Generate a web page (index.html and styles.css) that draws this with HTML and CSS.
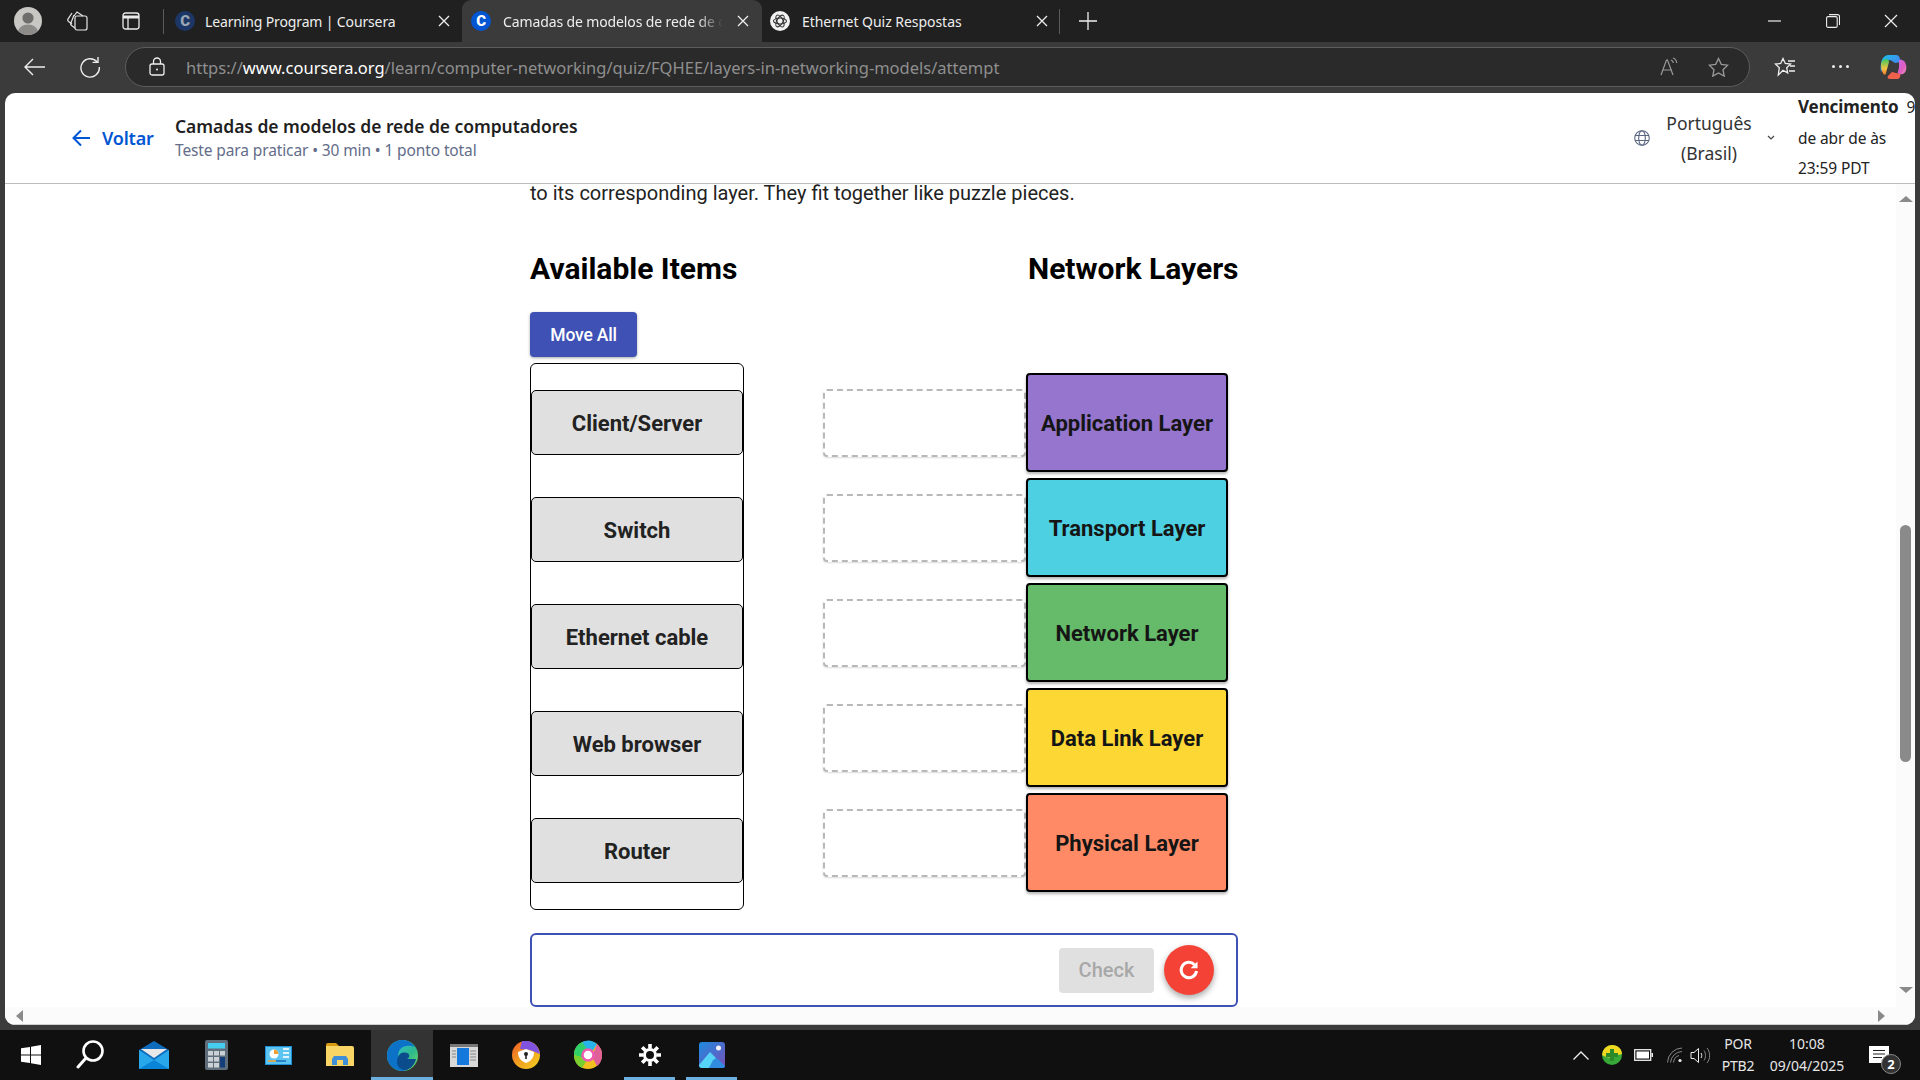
FILE: index.html
```html
<!DOCTYPE html>
<html lang="pt-BR">
<head>
<meta charset="utf-8">
<title>Camadas de modelos de rede de computadores</title>
<link rel="stylesheet" href="styles.css">
</head>
<body>
<div class="titlebar">
  <div class="slot-avatar"><svg width="28" height="28" viewBox="0 0 28 28"><defs><clipPath id="av"><circle cx="14" cy="14" r="14"/></clipPath></defs><circle cx="14" cy="14" r="14" fill="#c9c7c4"/><g clip-path="url(#av)"><circle cx="14" cy="11" r="5.6" fill="#6f6d6b"/><ellipse cx="14" cy="25" rx="10" ry="7.5" fill="#8d8b88"/></g></svg></div>
  <div class="slot-icon first"><svg width="22" height="22" viewBox="0 0 22 22" fill="none" stroke="#e6e6e6" stroke-width="1.2"><rect x="8" y="6" width="12" height="14" rx="2"/><path d="M8 18 4.5 15.5a2 2 0 0 1-.6-2.4L7 5M5 14 1.5 11.5a2 2 0 0 1-.4-2.6L5 3M7 6l3-4 6 4"/></svg></div>
  <div class="slot-icon"><svg width="18" height="18" viewBox="0 0 18 18" fill="none" stroke="#eaeaea" stroke-width="1.3"><rect x="1" y="1" width="16" height="16" rx="2.5"/><path d="M1 5h16" stroke-width="3"/><path d="M6 5v12"/></svg></div>
  <div class="tab-sep"></div>
  <div class="tab tab-one">
    <span class="favicon fav-dim">C</span><span class="tab-title">Learning Program | Coursera</span>
    <svg class="tab-x" width="12" height="12" viewBox="0 0 12 12"><path d="M1 1l10 10M11 1 1 11" stroke="#eee" stroke-width="1.3"/></svg>
  </div>
  <div class="tab tab-active">
    <span class="favicon fav-blue">C</span><span class="tab-title tab-fade">Camadas de modelos de rede de computadores</span>
    <svg class="tab-x" width="12" height="12" viewBox="0 0 12 12"><path d="M1 1l10 10M11 1 1 11" stroke="#eee" stroke-width="1.3"/></svg>
  </div>
  <div class="tab tab-three">
    <svg class="fav-svg" width="20" height="20" viewBox="0 0 20 20"><circle cx="10" cy="10" r="10" fill="#f2f2f2"/><g fill="none" stroke="#333" stroke-width="1.1"><ellipse cx="10" cy="10" rx="6.5" ry="3"/><ellipse cx="10" cy="10" rx="6.5" ry="3" transform="rotate(60 10 10)"/><ellipse cx="10" cy="10" rx="6.5" ry="3" transform="rotate(120 10 10)"/></g></svg>
    <span class="tab-title">Ethernet Quiz Respostas</span>
    <svg class="tab-x" width="12" height="12" viewBox="0 0 12 12"><path d="M1 1l10 10M11 1 1 11" stroke="#eee" stroke-width="1.3"/></svg>
  </div>
  <div class="tab-sep after"></div>
  <svg class="plus" width="18" height="18" viewBox="0 0 18 18"><path d="M9 0v18M0 9h18" stroke="#eee" stroke-width="1.3"/></svg>
  <div class="winctl">
    <svg width="14" height="14" viewBox="0 0 14 14"><path d="M0 7h13" stroke="#eee" stroke-width="1.2"/></svg>
    <svg width="14" height="14" viewBox="0 0 14 14" fill="none" stroke="#eee" stroke-width="1.1"><rect x=".6" y="2.6" width="10.6" height="10.8" rx="1.5"/><path d="M3 .6h8.5a2 2 0 0 1 2 2V11"/></svg>
    <svg width="14" height="14" viewBox="0 0 14 14"><path d="M1 1l12 12M13 1 1 13" stroke="#eee" stroke-width="1.2"/></svg>
  </div>
</div>

<div class="toolbar">
  <svg class="tool-back" width="22" height="18" viewBox="0 0 22 18" fill="none" stroke="#eee" stroke-width="1.4"><path d="M21 9H1M9 1 1 9l8 8"/></svg>
  <svg class="tool-reload" width="22" height="22" viewBox="0 0 22 22" fill="none" stroke="#eee" stroke-width="1.4"><path d="M18.2 6A9.2 9.2 0 1 0 20.3 11"/><path d="M19 1v5.4h-5.4"/></svg>
  <div class="address">
    <svg width="16" height="19" viewBox="0 0 16 19" fill="none" stroke="#eee" stroke-width="1.3"><rect x="1" y="7" width="14" height="11" rx="2"/><path d="M4.5 7V4.5a3.5 3.5 0 0 1 7 0V7"/><circle cx="8" cy="12.5" r="1" fill="#eee" stroke="none"/></svg>
    <span class="url"><span class="url-dim">https://</span><span class="url-host">www.coursera.org</span><span class="url-dim">/learn/computer-networking/quiz/FQHEE/layers-in-networking-models/attempt</span></span>
    <svg class="read" width="20" height="20" viewBox="0 0 20 20" fill="none" stroke="#9a9a9a" stroke-width="1.2"><path d="M1 18 6.5 3h1L13 18M3 13h9"/><path d="M11 3c1.5.5 2.2 1.7 2.4 3M13 1c2.4.7 3.5 2.600 3.700 5"/></svg>
    <svg class="star" width="21" height="20" viewBox="0 0 21 20" fill="none" stroke="#9a9a9a" stroke-width="1.3"><path d="m10.500 1.500 2.800 5.900 6.400.8-4.700 4.500 1.200 6.400-5.700-3.100-5.700 3.100 1.200-6.400L1.300 8.200l6.400-.8z"/></svg>
  </div>
  <svg class="fav-list" width="22" height="20" viewBox="0 0 22 20" fill="none" stroke="#eee" stroke-width="1.3"><path d="m9 1.500 2.300 5 5.200.6-3.800 3.600 1 5.200L9 13.300 4.300 18l1-7.300L1.500 7.100l5.200-.6z"/><path d="M14 4h7M16 9h5M15 14h6"/></svg>
  <div class="dots"><i></i><i></i><i></i></div>
  <svg class="copilot" width="28" height="28" viewBox="0 0 28 28"><defs><linearGradient id="cp1" x1="0" y1="0" x2="1" y2="1"><stop offset="0" stop-color="#19c3e8"/><stop offset=".6" stop-color="#3f8ef0"/><stop offset="1" stop-color="#2b5fd8"/></linearGradient><linearGradient id="cp2" x1="0" y1="0" x2="0" y2="1"><stop offset="0" stop-color="#38c860"/><stop offset=".6" stop-color="#f4c542"/><stop offset="1" stop-color="#f07a30"/></linearGradient><linearGradient id="cp3" x1="0" y1="0" x2="1" y2="1"><stop offset="0" stop-color="#c76be8"/><stop offset=".6" stop-color="#e05cc0"/><stop offset="1" stop-color="#f0a0c0"/></linearGradient></defs><path d="M8 2h8c2 0 3 1 3.500 2.500L21 9l-6 1-3-2C10 6 7 7 6 9l-5 10C0 14 1 6 4 4c1-1 2.500-2 4-2z" fill="url(#cp1)"/><path d="M1 12c0-3 2-6 5-6 2 0 3 1 3 3l-3 11c-.5 2-1 2-2.500 1C2 19 1 15 1 12z" fill="url(#cp2)"/><path d="M19 7c2-.5 4 0 5.500 1.500 2 2.500 2.500 7 1 10-1 2-3 3-5 3l-3-1 1.500-6z" fill="url(#cp3)"/><path d="M10 26c-2 0-3-1-2-3l4-4 8 2c1 3-1 5-3 5z" fill="#f0604a"/></svg>
</div>

<div class="page">
  <header class="course-head">
    <a class="back"><svg width="18" height="18" viewBox="0 0 18 18" fill="none" stroke="#0056d2" stroke-width="2"><path d="M18 9H2M9 1.500 1.500 9 9 16.500"/></svg><span>Voltar</span></a>
    <div class="course-title">
      <div class="course-name">Camadas de modelos de rede de computadores</div>
      <div class="course-meta">Teste para praticar • 30 min • 1 ponto total</div>
    </div>
    <svg class="globe" width="16" height="16" viewBox="0 0 16 16" fill="none" stroke="#5b6780" stroke-width="1.1"><circle cx="8" cy="8" r="7.300"/><ellipse cx="8" cy="8" rx="3.300" ry="7.300"/><path d="M1 5.500h14M1 10.500h14"/></svg>
    <div class="lang">Português<br>(Brasil)</div>
    <svg class="chev" width="8" height="6" viewBox="0 0 8 6" fill="none" stroke="#444" stroke-width="1.200"><path d="M1 1l3 3 3-3"/></svg>
    <div class="due"><div class="due-line"><strong>Vencimento</strong> &nbsp;9</div><div>de abr de às</div><div>23:59 PDT</div></div>
  </header>
  <div class="viewport">
    <main class="content">
      <p class="prompt">to its corresponding layer. They fit together like puzzle pieces.</p>
      <div class="board">
        <section class="col-items">
          <h2>Available Items</h2>
          <button class="move-all">Move All</button>
          <div class="items">
            <div class="item">Client/Server</div>
            <div class="item">Switch</div>
            <div class="item">Ethernet cable</div>
            <div class="item">Web browser</div>
            <div class="item">Router</div>
          </div>
        </section>
        <section class="col-layers">
          <h2>Network Layers</h2>
          <div class="layers">
            <div class="layer-row"><div class="drop"></div><div class="layer application">Application Layer</div></div>
            <div class="layer-row"><div class="drop"></div><div class="layer transport">Transport Layer</div></div>
            <div class="layer-row"><div class="drop"></div><div class="layer network">Network Layer</div></div>
            <div class="layer-row"><div class="drop"></div><div class="layer datalink">Data Link Layer</div></div>
            <div class="layer-row"><div class="drop"></div><div class="layer physical">Physical Layer</div></div>
          </div>
        </section>
      </div>
      <div class="status">
        <button class="check">Check</button>
        <button class="refresh"><svg width="22" height="22" viewBox="0 0 22 22" fill="none" stroke="#fff" stroke-width="3"><path d="M16.500 5.800A7.700 7.700 0 1 0 18.500 12"/><path d="M19.500 2.500v6.800h-6.800" fill="#fff" stroke="none"/></svg></button>
      </div>
    </main>
    <div class="vscroll">
      <span class="arrow-up"></span>
      <span class="thumb"></span>
      <span class="arrow-down"></span>
    </div>
  </div>
  <div class="hscroll"><span class="arrow-left"></span><span class="arrow-right"></span></div>
</div>

<div class="frame-bottom"></div>

<footer class="taskbar">
  <div class="task"><svg width="20" height="20" viewBox="0 0 20 20" fill="#fff"><path d="M0 3.200 9 1.900v7.700H0zM10 1.700 20 0v9.600H10zM0 10.400h9v7.700l-9-1.300zM10 10.400h10V20l-10-1.700z"/></svg></div>
  <div class="task task-search"><svg width="28" height="30" viewBox="0 0 28 30" fill="none" stroke="#fff"><circle cx="17" cy="11" r="9.500" stroke-width="2.600"/><path d="M10 18 2 27" stroke-width="3" stroke-linecap="round"/></svg></div>
  <div class="task"><svg width="30" height="28" viewBox="0 0 30 28"><path d="M15 0 30 9v19H0V9z" fill="#0f6cbd"/><path d="M2 8h26L15 17z" fill="#e8e8e8"/><path d="M0 9v19h30V9L15 19z" fill="#28a8ea"/><path d="M0 28 15 19l15 9z" fill="#0a84d6"/></svg></div>
  <div class="task"><svg width="23" height="30" viewBox="0 0 23 30"><rect width="23" height="30" rx="2" fill="#5f6e7a"/><rect x="3" y="3" width="17" height="5.500" fill="#45cdf0"/><g fill="#c9d0d6"><rect x="3" y="11" width="5" height="4.500"/><rect x="9" y="11" width="5" height="4.500"/><rect x="15" y="11" width="5" height="4.500"/><rect x="3" y="17" width="5" height="4.500"/><rect x="9" y="17" width="5" height="4.500"/><rect x="3" y="23" width="5" height="4.500"/><rect x="9" y="23" width="5" height="4.500"/></g><rect x="15" y="17" width="5" height="10.500" fill="#123f7a"/></svg></div>
  <div class="task"><svg width="27" height="19" viewBox="0 0 27 19"><rect width="27" height="19" fill="#1d8fd8"/><rect x="1" y="1" width="25" height="17" fill="#5cc4f0"/><circle cx="9" cy="8" r="4.500" fill="#fff"/><path d="M9 8V3.500A4.500 4.500 0 0 1 13.500 8z" fill="#f0a030"/><path d="M3 15h8" stroke="#f0a030" stroke-width="1.500"/><path d="M11 15h10" stroke="#1d6fb8" stroke-width="1.500"/><path d="M18 3h6M18 7h6M18 11h6" stroke="#dff3ff" stroke-width="2"/></svg></div>
  <div class="task"><svg width="28" height="24" viewBox="0 0 28 24"><path d="M0 2a2 2 0 0 1 2-2h8l3 3h-13z" fill="#d89a10"/><path d="M0 3h26a2 2 0 0 1 2 2v18H0z" fill="#f8d565"/><path d="M8 13h12l2 3v6H6v-6z" fill="#3e8fd8"/><rect x="11" y="17" width="6" height="5" fill="#f8d565"/></svg></div>
  <div class="task task-active"><svg width="31" height="31" viewBox="0 0 31 31"><defs><linearGradient id="ed1" x1="0" y1="0" x2="1" y2="1"><stop offset="0" stop-color="#35c1f1"/><stop offset=".6" stop-color="#2db98e"/><stop offset="1" stop-color="#7ee05a"/></linearGradient></defs><circle cx="15.500" cy="15.500" r="15.500" fill="url(#ed1)"/><path d="M0 16C0 7 7 0 15.500 0c5 0 10 3 12 7-4-2-11-2-14 2-3 3-3 8 0 12 2 3 7 5 11 5-3 3-6 5-9 5C7 31 0 24 0 16z" fill="#0c72c8"/><path d="M13 14c3-2 8-2 9 1 .5 1.500 0 3-2 4h9c-1 5-5 10-10 11-5 0-9-3-9-8 0-3 1-6 3-8z" fill="#0b4c8c"/></svg></div>
  <div class="task"><svg width="28" height="23" viewBox="0 0 28 23"><rect width="28" height="23" fill="#d8d8d8"/><rect width="28" height="3" fill="#777"/><rect x="7" y="4" width="12" height="17" fill="#1478dc"/><path d="M2 7h4M2 10h4M2 13h4M20 7h6M20 10h6M20 13h6M20 16h6" stroke="#888"/></svg></div>
  <div class="task"><svg width="28" height="28" viewBox="0 0 28 28"><defs><linearGradient id="av1" x1="0" y1="0" x2="1" y2="1"><stop offset="0" stop-color="#f05a28"/><stop offset=".5" stop-color="#f0a020"/><stop offset="1" stop-color="#f4d020"/></linearGradient></defs><circle cx="14" cy="14" r="14" fill="url(#av1)"/><path d="M10 0h6c6 1 11 6 12 13l-10-4-10-1z" fill="#7f52e0"/><path d="M14 8l8 3c0 6-3 9-8 11-5-2-8-5-8-11z" fill="#fff"/><circle cx="14" cy="13" r="2" fill="#222"/><rect x="13.200" y="13" width="1.600" height="5" fill="#222"/></svg></div>
  <div class="task"><svg width="30" height="30" viewBox="0 0 30 30" fill="none"><circle cx="15" cy="15" r="14" fill="#f4c020"/><path d="M1 15a14 14 0 0 1 8-13l6 7-6 9z" fill="#2fd06a"/><path d="M9 2a14 14 0 0 1 15 2l-5 8-5-3z" fill="#28b4e8"/><path d="M24 4a14 14 0 0 1 5 11c0 5-2 9-5 11l-5-9z" fill="#e0609a"/><path d="M1 15c0 6 3 11 8 13l5-8-5-3z" fill="#7ad030"/><circle cx="15" cy="15" r="5.500" fill="#fff" stroke="#f05ab0" stroke-width="2.500"/></svg></div>
  <div class="task task-on"><svg width="22" height="22" viewBox="0 0 22 22" fill="none" stroke="#fff"><circle cx="11" cy="11" r="5.500" stroke-width="3"/><path d="M11 0v4.500M11 17.500V22M0 11h4.500M17.500 11H22M3.200 3.200l3.200 3.200M15.600 15.600l3.200 3.200M18.800 3.200l-3.200 3.200M6.400 15.600l-3.200 3.200" stroke-width="3.600"/></svg></div>
  <div class="task task-on"><svg width="26" height="26" viewBox="0 0 26 26"><defs><linearGradient id="ph1" x1="0" y1="0" x2="1" y2="1"><stop offset="0" stop-color="#1c8ae0"/><stop offset="1" stop-color="#7a50b8"/></linearGradient></defs><rect width="26" height="26" rx="3" fill="url(#ph1)"/><circle cx="19.500" cy="6" r="2.500" fill="#f0f0ff"/><path d="M0 23 11 10l6 6-7 10H3a3 3 0 0 1-3-3z" fill="#56d4f8"/><path d="M10 26l4-8 4-2 8 8v1l-2 1z" fill="#2f8ce0"/></svg></div>
  <div class="tray">
    <svg width="16" height="9" viewBox="0 0 16 9" fill="none" stroke="#eee" stroke-width="1.300"><path d="M.5 8.500 8 1l7.500 7.500"/></svg>
    <svg class="tray-green" width="20" height="20" viewBox="0 0 20 20"><circle cx="10" cy="10" r="10" fill="#38a838"/><path d="M0 10a10 10 0 0 1 10-10c6 0 10 4 10 9l-4 1-6 3-6-1z" fill="#f0d820"/><path d="M8 4h4v4h4v4h-4v4H8v-4H4V8h4z" fill="#2a8a2a"/></svg>
    <svg class="tray-batt" width="19" height="12" viewBox="0 0 19 12"><rect x=".7" y=".7" width="16" height="10.600" fill="none" stroke="#eee" stroke-width="1.300"/><rect x="2.500" y="2.500" width="12.500" height="7" fill="#fff"/><rect x="17.500" y="4" width="1.500" height="4" fill="#eee"/></svg>
    <svg class="tray-wifi" width="16" height="16" viewBox="0 0 16 16" fill="none" stroke="#888" stroke-width="1"><path d="M.5 15.500A15 15 0 0 1 15 1M3.500 15.500A12 12 0 0 1 15 4.500M6.500 15.500A8 8 0 0 1 12 8.500"/><circle cx="13" cy="13.500" r="1.600" fill="#eee" stroke="none"/></svg>
    <svg class="tray-vol" width="21" height="17" viewBox="0 0 21 17" fill="none" stroke-width="1"><path d="M1 5.500h3L8.500 1.500v14L4 11.500H1z" stroke="#eee"/><path d="M11 6c1 1.500 1 3.500 0 5" stroke="#eee"/><path d="M14 3.500c2 3 2 7 0 10M17 1c3.500 4 3.500 11 0 15" stroke="#888"/></svg>
  </div>
  <div class="ime"><div>POR</div><div>PTB2</div></div>
  <div class="clock"><div>10:08</div><div>09/04/2025</div></div>
  <div class="notify">
    <svg width="22" height="19" viewBox="0 0 22 19"><path d="M0 0h20v17H0z" fill="#fff"/><path d="M4 4.500h12M4 8h12M4 11.500h9" stroke="#222" stroke-width="1.200"/></svg>
    <span class="badge">2</span>
  </div>
</footer>
</body>
</html>
```
FILE: styles.css
```css
* { box-sizing: border-box; }
html, body { margin: 0; height: 100%; }
body {
  width: 1920px; height: 1080px; overflow: hidden;
  display: flex; flex-direction: column;
  background: #3b3b3b;
  font-family: Roboto, "Liberation Sans", sans-serif;
}
svg { display: block; flex: none; }

/* title bar */
.titlebar { height: 42px; flex: none; background: #202020; display: flex; align-items: center; color: #eee; }
.slot-avatar { width: 56px; display: flex; justify-content: center; }
.slot-icon { display: flex; justify-content: center; }
.slot-icon.first { width: 43px; }
.slot-icon + .slot-icon { width: 64px; }
.tab-sep { width: 1px; height: 25px; background: #5a5a5a; margin-right: 8px; }
.tab-sep.after { margin: 0 19px 0 7px; }
.tab { height: 42px; display: flex; align-items: center; flex: none; font-family: "Noto Sans", sans-serif; font-size: 14px; letter-spacing: -0.12px; }
.tab-one { width: 290px; padding: 0 12px 0 0; }
.tab-one .tab-title { margin-left: 10px; letter-spacing: -0.14px; }
.tab-active { width: 300px; padding: 0 13px 0 9px; background: #3b3b3b; border-radius: 9px 9px 0 0; }
.tab-three { width: 290px; padding: 0 4px 0 8px; }
.tab-three .tab-title { letter-spacing: -0.04px; }
.favicon { width: 20px; height: 20px; border-radius: 50%; flex: none; display: flex; align-items: center; justify-content: center; font: 900 15px/1 Roboto, sans-serif; }
.fav-dim { background: #1c3766; color: #9aa5b5; margin-left: 3px; }
.fav-blue { background: #0056d2; color: #fff; }
.tab-title { flex: 1; margin-left: 12px; white-space: nowrap; overflow: hidden; }
.tab-fade { -webkit-mask-image: linear-gradient(to right, #000 88%, transparent); mask-image: linear-gradient(to right, #000 88%, transparent); margin-right: 14px; }
.tab-x { flex: none; }
.winctl { margin-left: auto; display: flex; align-items: center; gap: 44px; padding-right: 22px; }

/* toolbar */
.toolbar { height: 51px; flex: none; background: #3b3b3b; display: flex; align-items: center; padding-bottom: 2px; }
.tool-back { margin-left: 24px; }
.tool-reload { margin-left: 33px; }
.address { margin-left: 24px; width: 1625px; height: 40px; border: 1px solid #5c5c5c; border-radius: 20px; background: #2a2a2a; display: flex; align-items: center; padding-left: 23px; }
.url { margin-left: 21px; padding-top: 2px; font-family: "Noto Sans", sans-serif; font-size: 16.5px; white-space: nowrap; letter-spacing: 0; }
.url-dim { color: #8f8f8f; }
.url-host { color: #fff; }
.read { margin-left: auto; }
.star { margin: 0 20px 0 28px; }
.fav-list { margin-left: 24px; }
.dots { margin-left: 36px; display: flex; gap: 4px; }
.dots i { width: 3px; height: 3px; background: #eee; border-radius: 50%; }
.copilot { margin-left: 31px; }

/* page */
.page { flex: 1; margin: 0 5px; background: #fff; border-radius: 10px; overflow: hidden; display: flex; flex-direction: column; min-height: 0; }
.frame-bottom { height: 5px; flex: none; background: #3b3b3b; }
.course-head { height: 91px; flex: none; border-bottom: 1px solid #bdbdbd; display: flex; align-items: center; padding-left: 67px; font-family: "Noto Sans", sans-serif; overflow: hidden; white-space: nowrap; }
.back { display: flex; align-items: center; gap: 12px; color: #0056d2; font-size: 18px; font-weight: 600; width: 103px; letter-spacing: -0.2px; }
.course-title { margin-top: -2px; }
.course-name { font-size: 17.5px; font-weight: 600; color: #1f1f1f; line-height: 24px; letter-spacing: -0.05px; }
.course-meta { font-size: 15.5px; color: #636d8a; line-height: 22px; letter-spacing: -0.12px; margin-top: 1px; }
.globe { margin-left: auto; }
.lang { width: 110px; margin-left: 4px; text-align: center; font-size: 17.5px; line-height: 30px; color: #333; letter-spacing: 0; }
.chev { margin: 0 23px 0 3px; }
.due { width: 117px; font-size: 15.5px; line-height: 30.5px; color: #222; letter-spacing: -0.1px; }
.due-line { width: 125px; }
.due strong { font-weight: 700; font-size: 17px; letter-spacing: -0.1px; }

.viewport { flex: 1; display: flex; min-height: 0; }
.content { flex: 1; padding-left: 525px; overflow: hidden; }
.prompt { margin: 0; font-size: 20px; line-height: 18px; height: 18px; color: #222; white-space: nowrap; }
.board { display: flex; margin-top: 49px; }
h2 { margin: 0; font-size: 30px; line-height: 35px; font-weight: 700; color: #000; white-space: nowrap; }
.col-items { width: 293px; }
.move-all { display: block; margin-top: 26px; width: 107px; height: 45px; border: 0; border-radius: 4px; background: #3f51b5; color: #fff; font: 500 17.5px Roboto, sans-serif; letter-spacing: -0.2px; box-shadow: 0 1px 3px rgba(0,0,0,.35); padding: 0; }
.items { margin-top: 6px; width: 214px; height: 547px; border: 1px solid #000; border-radius: 6px; padding: 26.4px 0; display: flex; flex-direction: column; gap: 42px; }
.item { height: 65px; flex: none; border: 1px solid #000; border-radius: 5px; background: #e0e0e0; display: flex; align-items: center; justify-content: center; padding-top: 2px; font-size: 22px; font-weight: 700; color: #222; }
.col-layers { width: 415px; }
.col-layers h2 { margin-left: 205px; }
.layers { margin-top: 87px; display: flex; flex-direction: column; gap: 6px; }
.layer-row { display: flex; align-items: center; }
.drop { width: 203px; height: 68px; border: 2px dashed #b8b8b8; border-radius: 4px; box-shadow: 0 1px 2px rgba(0,0,0,.14); }
.layer { width: 202px; height: 99px; border: 2px solid #000; border-radius: 4px; display: flex; align-items: center; justify-content: center; padding-top: 2px; font-size: 22px; font-weight: 700; color: #151515; box-shadow: 0 2px 3px rgba(0,0,0,.3); }
.application { background: #9575cd; }
.transport { background: #4dd0e1; }
.network { background: #66bb6a; }
.datalink { background: #fdd835; }
.physical { background: #ff8a65; }
.status { margin-top: 23px; width: 708px; height: 74px; border: 2px solid #3f51b5; border-radius: 6px; display: flex; align-items: center; justify-content: flex-end; gap: 10px; padding-right: 22px; }
.check { width: 95px; height: 45px; border: 0; border-radius: 4px; background: #e0e0e0; color: #a8a8a8; font: 500 20px Roboto, sans-serif; padding: 0; }
.refresh { width: 50px; height: 50px; border: 0; border-radius: 50%; background: #f44336; display: flex; align-items: center; justify-content: center; padding: 0; box-shadow: 0 3px 6px rgba(0,0,0,.35); }

.vscroll { width: 19px; flex: none; background: #fbfbfb; display: flex; flex-direction: column; align-items: center; }
.arrow-up, .arrow-down { width: 0; height: 0; border-left: 7px solid transparent; border-right: 7px solid transparent; }
.arrow-up { margin-top: 12px; border-bottom: 6px solid #8a8a8a; }
.thumb { width: 11px; height: 237px; margin-top: 323px; background: #8a8a8a; border-radius: 6px; }
.arrow-down { margin-top: 225px; border-top: 6px solid #8a8a8a; }
.hscroll { height: 18px; flex: none; background: #fbfbfb; display: flex; align-items: center; justify-content: space-between; padding: 0 30px 0 11px; border-bottom: 1px solid #cfcfcf; }
.arrow-left, .arrow-right { width: 0; height: 0; border-top: 6px solid transparent; border-bottom: 6px solid transparent; }
.arrow-left { border-right: 7px solid #8a8a8a; }
.arrow-right { border-left: 7px solid #8a8a8a; }

/* taskbar */
.taskbar { height: 50px; flex: none; background: #101010; display: flex; align-items: center; font-family: "Noto Sans", sans-serif; color: #e6e6e6; font-size: 14px; }
.task { width: 62px; height: 50px; flex: none; display: flex; align-items: center; justify-content: center; position: relative; }
.task:first-child { width: 61px; }
.task-search svg { margin-right: 4px; }
.task-active { background: #333; }
.task-active::after, .task-on::after { content: ""; position: absolute; bottom: 0; height: 3px; background: #6cb0e0; }
.task-active::after { left: 0; right: 0; }
.task-on::after { left: 5px; right: 6px; }
.tray { margin-left: auto; display: flex; align-items: center; }
.tray-green { margin-left: 13px; }
.tray-batt { margin-left: 12px; }
.tray-wifi { margin-left: 14px; }
.tray-vol { margin-left: 7px; }
.ime { margin-left: 3px; width: 48px; text-align: center; line-height: 22px; letter-spacing: -0.2px; }
.clock { margin-left: 0; width: 90px; text-align: center; line-height: 22px; letter-spacing: 0; }
.notify { margin-left: 15px; width: 53px; position: relative; display: flex; padding-left: 2px; }
.badge { position: absolute; left: 14px; top: 8px; width: 20px; height: 20px; border-radius: 50%; background: #333; border: 1px solid #888; color: #fff; font-size: 13px; font-weight: 700; display: flex; align-items: center; justify-content: center; }
```
